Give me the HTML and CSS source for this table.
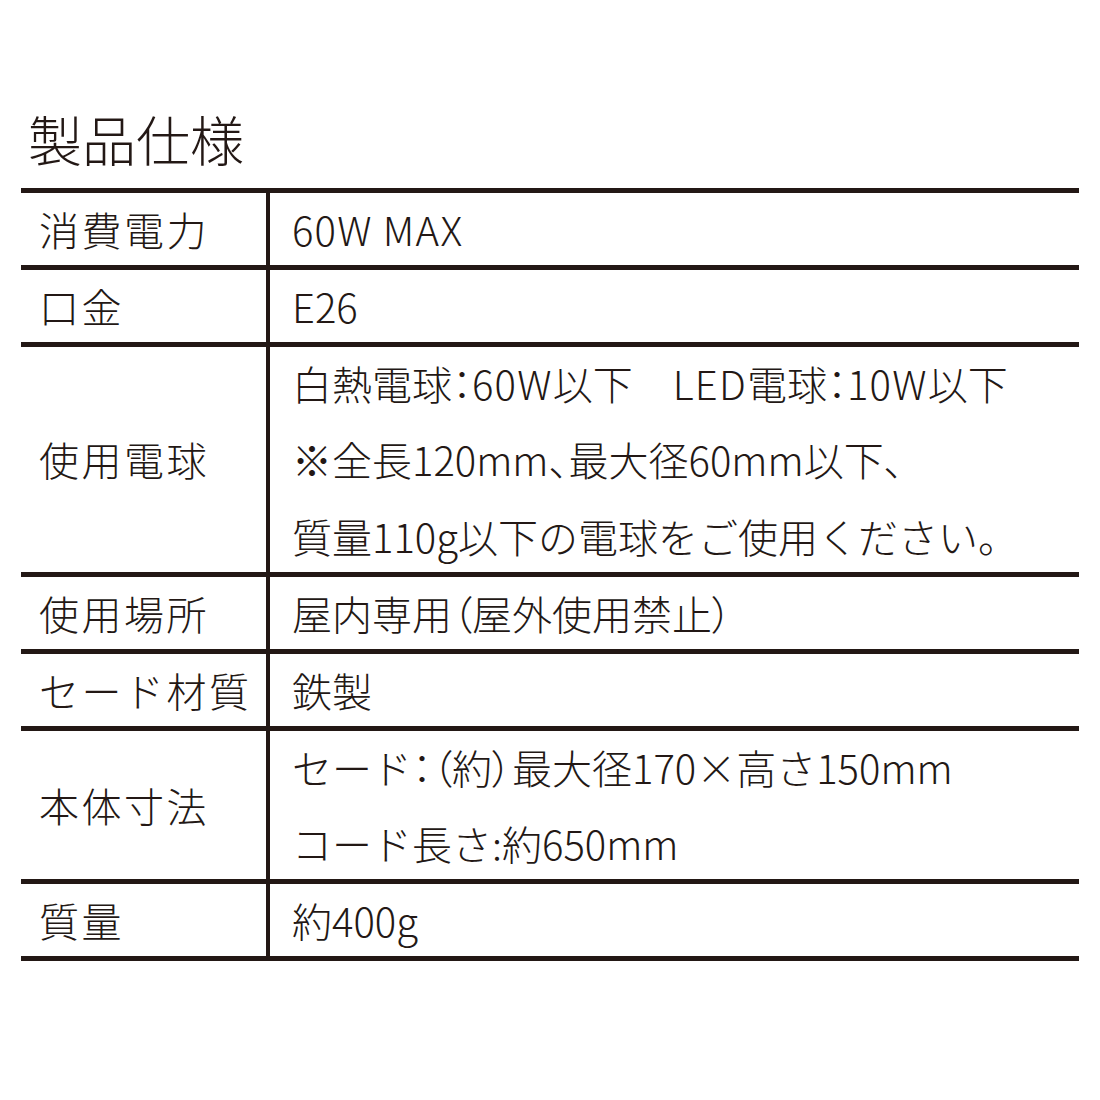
FILE: index.html
```html
<!DOCTYPE html>
<html lang="ja">
<head>
<meta charset="utf-8">
<title>製品仕様</title>
<link rel="stylesheet" href="styles.css">
</head>
<body>
<main class="page">
  <h1 class="title">製品仕様</h1>
  <div class="spec">
    <div class="row">
      <div class="label">消費電力</div>
      <div class="value"><p><span class="lat">60W MAX</span></p></div>
    </div>
    <div class="row">
      <div class="label">口金</div>
      <div class="value"><p>E26</p></div>
    </div>
    <div class="row">
      <div class="label">使用電球</div>
      <div class="value">
        <p>白熱電球<span class="pn">：</span><span class="lat">60W</span>以下　<span class="lat">LED</span>電球<span class="pn">：</span><span class="lat">10W</span>以下</p>
        <p>※全長120mm<span class="pn">、</span>最大径60mm以下<span class="pn">、</span></p>
        <p>質量110g以下の電球をご使用ください。</p>
      </div>
    </div>
    <div class="row">
      <div class="label">使用場所</div>
      <div class="value"><p>屋内専用<span class="pn">（</span>屋外使用禁止<span class="pn">）</span></p></div>
    </div>
    <div class="row">
      <div class="label">セード材質</div>
      <div class="value"><p>鉄製</p></div>
    </div>
    <div class="row">
      <div class="label">本体寸法</div>
      <div class="value">
        <p>セード<span class="pn">：（</span>約<span class="pn">）</span>最大径170×高さ150mm</p>
        <p>コード長さ:約650mm</p>
      </div>
    </div>
    <div class="row last">
      <div class="label">質量</div>
      <div class="value"><p>約400g</p></div>
    </div>
  </div>
</main>
</body>
</html>
```

FILE: styles.css
```css
html, body {
  margin: 0;
  padding: 0;
  background: #ffffff;
}

body {
  font-family: "Noto Sans CJK JP", "Noto Sans", sans-serif;
  font-weight: 300;
  color: #231815;
}

.page {
  width: 1100px;
  height: 1100px;
  box-sizing: border-box;
  padding: 112px 21px 0 21px;
}

.title {
  margin: 0 0 22px 7px;
  font-size: 54px;
  line-height: 54px;
  font-weight: 300;
  letter-spacing: 0;
}

.spec {
  width: 1058px;
}

.row {
  display: grid;
  grid-template-columns: 249px 1fr;
  border-top: 5px solid #231815;
}

.row.last {
  border-bottom: 5px solid #231815;
}

.label {
  display: flex;
  align-items: center;
  padding-left: 18px;
  border-right: 4px solid #231815;
  font-size: 40px;
  letter-spacing: 2.5px;
  white-space: nowrap;
}

.value {
  display: flex;
  flex-direction: column;
  justify-content: center;
  padding-left: 22px;
  font-size: 40px;
  margin: -2px 0 -3px 0;
}

.value p {
  margin: 0;
  line-height: 76.8px;
  white-space: nowrap;
}

.pn {
  font-feature-settings: "palt";
}

.lat {
  letter-spacing: 1.2px;
}
```
